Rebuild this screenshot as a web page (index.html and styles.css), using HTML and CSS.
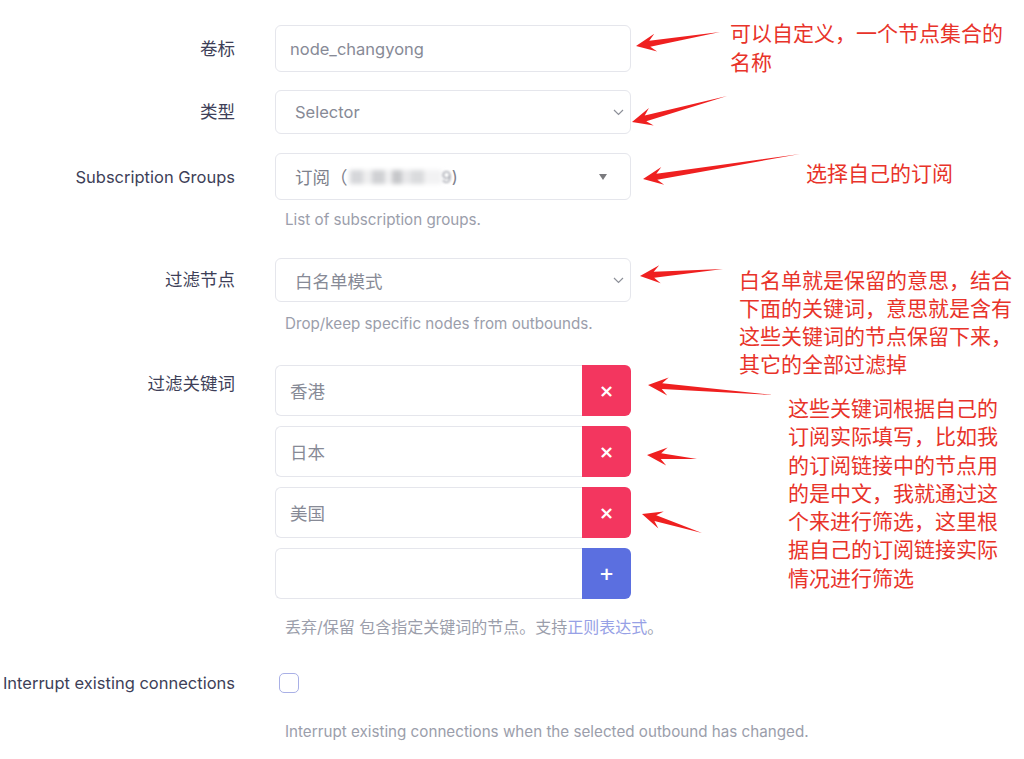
FILE: index.html
```html
<!DOCTYPE html>
<html lang="zh-CN">
<head>
<meta charset="utf-8">
<title>Outbound</title>
<link rel="stylesheet" href="styles.css">
</head>
<body>
<div class="page">
  <div class="form">
    <div class="field f1">
      <div class="label zh">卷标</div>
      <div class="control box input">node_changyong</div>
    </div>

    <div class="field f2">
      <div class="label zh">类型</div>
      <div class="control box select s44">
        <span>Selector</span>
        <svg class="chev" width="11" height="7" viewBox="0 0 11 7"><polyline points="1,1 5.5,5.5 10,1" fill="none" stroke="#8d9099" stroke-width="1.2"/></svg>
      </div>
    </div>

    <div class="field f3">
      <div class="label">Subscription Groups</div>
      <div class="control box select s47 tri-sel">
        <span class="sub"><span class="zh">订阅（</span><span class="blur"></span><span class="blur9">9</span>)</span>
        <svg class="tri" width="8" height="6" viewBox="0 0 8 6"><polygon points="0,0 8,0 4,6" fill="#7a7a7e"/></svg>
      </div>
      <div class="help h3">List of subscription groups.</div>
    </div>

    <div class="field f4">
      <div class="label zh">过滤节点</div>
      <div class="control box select s44">
        <span class="zh">白名单模式</span>
        <svg class="chev" width="11" height="7" viewBox="0 0 11 7"><polyline points="1,1 5.5,5.5 10,1" fill="none" stroke="#8d9099" stroke-width="1.2"/></svg>
      </div>
      <div class="help h4">Drop/keep specific nodes from outbounds.</div>
    </div>

    <div class="field f5">
      <div class="label zh top">过滤关键词</div>
      <div class="control kw-list">
        <div class="kw"><div class="kw-input zh">香港</div><div class="kw-btn del">×</div></div>
        <div class="kw"><div class="kw-input zh">日本</div><div class="kw-btn del">×</div></div>
        <div class="kw"><div class="kw-input zh">美国</div><div class="kw-btn del">×</div></div>
        <div class="kw"><div class="kw-input"></div><div class="kw-btn add">+</div></div>
      </div>
      <div class="help help-zh h5">丢弃/保留 包含指定关键词的节点。支持<span class="link">正则表达式</span>。</div>
    </div>

    <div class="field f6">
      <div class="label">Interrupt existing connections</div>
      <div class="control check-wrap"><span class="checkbox"></span></div>
      <div class="help h6">Interrupt existing connections when the selected outbound has changed.</div>
    </div>
  </div>

  <div class="note n1">可以自定义，一个节点集合的<br>名称</div>
  <div class="note n2">选择自己的订阅</div>
  <div class="note n3">白名单就是保留的意思，结合<br>下面的关键词，意思就是含有<br>这些关键词的节点保留下来，<br>其它的全部过滤掉</div>
  <div class="note n4">这些关键词根据自己的<br>订阅实际填写，比如我<br>的订阅链接中的节点用<br>的是中文，我就通过这<br>个来进行筛选，这里根<br>据自己的订阅链接实际<br>情况进行筛选</div>

  <svg class="arrows" width="1024" height="759" viewBox="0 0 1024 759">
    <g fill="#ef2020">
      <polygon points="720,32 649.3,40.74 654.25,33.83 636,46 657.2,51.59 650.3,46.66"/>
      <polygon points="727,96 644.71,115.41 648.91,108.04 632,122 653.67,125.4 646.29,121.19"/>
      <polygon points="800,154 656.36,173.84 661.33,166.96 643,179 664.17,184.74 657.3,179.76"/>
      <polygon points="723,269 653.7,271.83 659.17,265.35 640,276 660.69,283.29 654.2,277.81"/>
      <polygon points="773,395 662.2,383.13 668.66,377.62 648,385 667.22,395.56 661.72,389.11"/>
      <polygon points="697,459 661.2,453.13 667.66,447.62 647,455 666.22,465.56 660.72,459.11"/>
      <polygon points="702,533 656.26,515.37 663.79,511.46 642,514 658.35,528.62 654.44,521.09"/>
    </g>
  </svg>
</div>
</body>
</html>
```

FILE: styles.css
```css
html, body {
  margin: 0;
  padding: 0;
  background: #ffffff;
}

.page {
  position: relative;
  width: 1024px;
  height: 759px;
  overflow: hidden;
  font-family: Inter, "Noto Sans", "Noto Sans CJK SC", sans-serif;
}

.form {
  padding-top: 25px;
  display: flex;
  flex-direction: column;
}

.field {
  display: grid;
  grid-template-columns: 235px 356px;
  column-gap: 40px;
}

.label {
  grid-column: 1;
  grid-row: 1;
  display: flex;
  justify-content: flex-end;
  align-items: center;
  font-size: 16.5px;
  line-height: 24px;
  color: #3e3f58;
  white-space: nowrap;
}

.zh {
  font-size: 17.5px;
}

.label.top {
  align-items: flex-start;
  padding-top: 7px;
}

.control {
  grid-column: 2;
  grid-row: 1;
}

.help {
  grid-column: 2;
  grid-row: 2;
  font-size: 15.2px;
  line-height: 20px;
  color: #9b9eab;
  padding-left: 10px;
  white-space: nowrap;
}

.help-zh {
  font-size: 16px;
}

.link {
  color: #97a1e6;
}

.box {
  box-sizing: border-box;
  border: 1px solid #e5e6ec;
  border-radius: 6px;
  background: #ffffff;
  display: flex;
  align-items: center;
  font-size: 16.5px;
  color: #878a96;
}

.input {
  height: 47px;
  padding-left: 14px;
}

.select {
  padding-left: 19px;
  padding-right: 6px;
  justify-content: space-between;
}

.s44 { height: 44px; }
.s47 { height: 47px; }

.tri-sel {
  padding-right: 23px;
}

.chev {
  display: block;
  margin-top: 1px;
}

.tri {
  display: block;
}

.sub {
  display: flex;
  align-items: center;
  color: #7e818c;
}

.blur {
  display: inline-block;
  width: 92px;
  height: 14px;
  margin-left: 2px;
  background:
    linear-gradient(90deg,
      #d6d7da 0 14%, #eeeeef 14% 24%, #d0d1d4 24% 38%, #f1f1f2 38% 46%,
      #c6c7ca 46% 56%, #e8e8ea 56% 66%, #dadbdd 66% 80%, #f2f2f3 80% 100%);
  filter: blur(2px);
}

.blur9 {
  filter: blur(1px);
  color: #a2a4ad;
}

.f2 { margin-top: 18px; }
.f3 { margin-top: 19px; }
.h3 { margin-top: 10px; }
.f4 { margin-top: 28px; }
.h4 { margin-top: 12px; }
.f5 { margin-top: 31px; }
.h5 { margin-top: 18px; }
.f6 { margin-top: 34px; }
.h6 { margin-top: 27px; }

.kw-list {
  display: flex;
  flex-direction: column;
  gap: 10px;
}

.kw {
  display: flex;
  height: 51px;
}

.kw-input {
  flex: 1;
  box-sizing: border-box;
  border: 1px solid #e5e6ec;
  border-right: none;
  border-radius: 6px 0 0 6px;
  padding-left: 14px;
  display: flex;
  align-items: center;
  font-size: 17.5px;
  color: #878a96;
}

.kw-btn {
  width: 49px;
  border-radius: 0 6px 6px 0;
  display: flex;
  align-items: center;
  justify-content: center;
  color: #ffffff;
  font-size: 18px;
  font-weight: 600;
  font-family: "DejaVu Sans", sans-serif;
}

.del { background: #f3365f; }
.add { background: #5b6fe0; }

.check-wrap {
  display: flex;
  align-items: center;
  height: 24px;
}

.checkbox {
  box-sizing: border-box;
  width: 20px;
  height: 20px;
  margin-left: 4px;
  border: 1.5px solid #a9b0e6;
  border-radius: 5px;
  background: #ffffff;
}

.note {
  position: absolute;
  font-family: "Noto Sans CJK SC", sans-serif;
  font-size: 21px;
  line-height: 28px;
  color: #e8332a;
  white-space: nowrap;
}

.n1 { left: 730px; top: 18px; line-height: 29px; }
.n2 { left: 806px; top: 158px; }
.n3 { left: 739px; top: 265px; }
.n4 { left: 788px; top: 393px; line-height: 28.3px; }

.arrows {
  position: absolute;
  left: 0;
  top: 0;
  pointer-events: none;
}
```
